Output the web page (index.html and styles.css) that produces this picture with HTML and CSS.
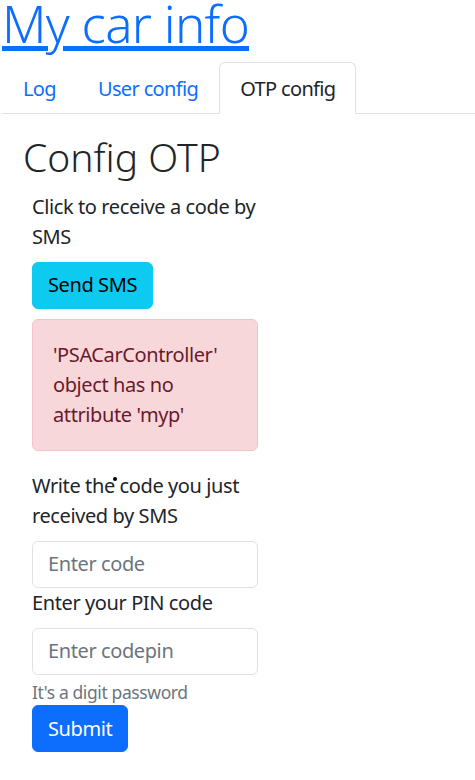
FILE: index.html
```html
<!DOCTYPE html>
<html lang="en">
  <head>
    <meta charset="UTF-8" />
    <meta content="width=device-width, initial-scale=1.0" name="viewport" />
    <title>My car info</title>
    <link rel="stylesheet" href="styles.css">
  </head>
  <body>
    <h1 class="site-title"><a href="/">My car info</a></h1>

    <ul class="nav-tabs">
      <li><a href="#log" class="tab">Log</a></li>
      <li><a href="#user" class="tab">User config</a></li>
      <li><a href="#otp" class="tab active">OTP config</a></li>
    </ul>

    <div class="tab-pane" id="otp">
      <h2 class="page-title">Config OTP</h2>
      <form class="otp-form">
        <p class="hint">Click to receive a code by SMS</p>
        <button type="button" class="btn btn-info">Send SMS</button>

        <div class="alert">'PSACarController' object has no attribute 'myp'</div>

        <label for="code" class="field-label">Write the code you just received by SMS</label>
        <input type="text" id="code" class="field" placeholder="Enter code" />

        <label for="codepin" class="field-label">Enter your PIN code</label>
        <input type="password" id="codepin" class="field" placeholder="Enter codepin" />
        <div class="form-text">It's a digit password</div>

        <button type="submit" class="btn btn-primary">Submit</button>
      </form>
    </div>

    <!-- mouse pointer left on the page -->
    <span class="cursor-dot"></span>
  </body>
</html>
```

FILE: styles.css
```css
html {
  font-size: 20px;
}
body {
  margin: 0;
  padding: 0 0 0 2px;
  font-family: "Noto Sans", "Open Sans", sans-serif;
  font-size: 1rem;
  line-height: 1.5;
  letter-spacing: -0.4px;
  color: #212529;
  background: #fff;
  position: relative;
}
.site-title {
  margin: 0 0 16px;
  font-size: 51px;
  font-weight: 300;
  line-height: 46px;
  letter-spacing: -0.7px;
}
.site-title a {
  color: #0d6efd;
  text-decoration: underline;
}

/* tabs */
.nav-tabs {
  display: flex;
  list-style: none;
  margin: 0;
  padding: 0;
  border-bottom: 1px solid #dee2e6;
}
.nav-tabs .tab {
  display: block;
  padding: 11px 20px 9px;
  margin-bottom: -1px;
  border: 1px solid transparent;
  border-radius: 6px 6px 0 0;
  color: #0d6efd;
  letter-spacing: -0.65px;
  text-decoration: none;
}
.nav-tabs .tab.active {
  color: #212529;
  background: #fff;
  border-color: #dee2e6 #dee2e6 #fff;
}

.tab-pane {
  padding-left: 21px;
}
.page-title {
  margin: 20px 0 11px;
  font-size: 39px;
  font-weight: 300;
  line-height: 1.2;
  letter-spacing: 0;
}

/* form column */
.otp-form {
  width: 226px;
  padding-left: 9px;
}
.hint {
  margin: 0 0 10px;
}
.btn {
  display: inline-block;
  padding: 7.5px 15px;
  font-family: inherit;
  font-size: 1rem;
  line-height: 1.5;
  letter-spacing: inherit;
  border: 1px solid transparent;
  border-radius: 6px;
  cursor: pointer;
}
.btn-info {
  background: #0dcaf0;
  border-color: #0dcaf0;
  color: #000;
}
.btn-primary {
  background: #0d6efd;
  border-color: #0d6efd;
  color: #fff;
}
.alert {
  margin: 10px 0 20px;
  padding: 20px;
  background: #f8d7da;
  border: 1px solid #f5c2c7;
  border-radius: 6px;
  color: #6a1a2a;
}
.field-label {
  display: block;
  margin-bottom: 10px;
}
.field {
  display: block;
  box-sizing: border-box;
  width: 100%;
  padding: 7.5px 15px;
  font-family: inherit;
  font-size: 1rem;
  line-height: 1.5;
  letter-spacing: inherit;
  color: #212529;
  background: #fff;
  border: 1px solid #dee2e6;
  border-radius: 6px;
}
.field::placeholder {
  color: #6c757d;
}
.form-text {
  margin-top: 4px;
  font-size: 0.875em;
  color: #6c757d;
}

.cursor-dot {
  position: absolute;
  left: 113px;
  top: 477px;
  width: 4px;
  height: 4px;
  border-radius: 50%;
  background: #000;
}
```
